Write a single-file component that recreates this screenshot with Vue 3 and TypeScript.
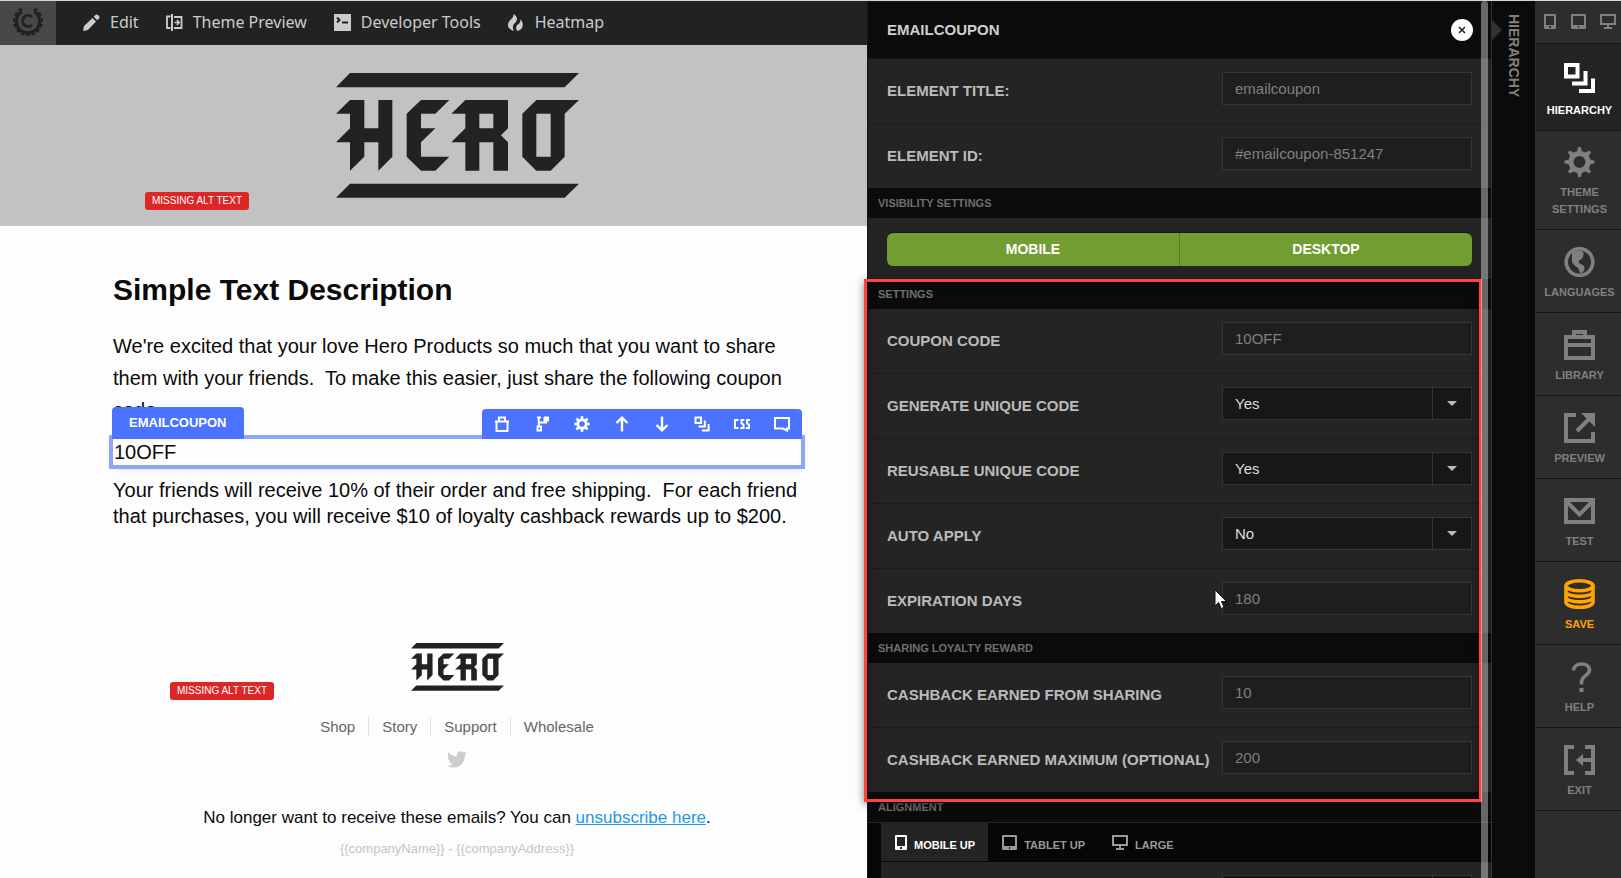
<script setup lang="ts">
import { ref, reactive } from 'vue'

interface Field {
  id: string
  label: string
  kind: 'text' | 'select'
  options?: string[]
}
interface NavItem {
  id: string
  label: string
}

const values = reactive<Record<string, string>>({
  title: 'emailcoupon',
  elementId: '#emailcoupon-851247',
  coupon: '10OFF',
  unique: 'Yes',
  reusable: 'Yes',
  autoApply: 'No',
  expiration: '180',
  cashback: '10',
  cashbackMax: '200',
  align: 'Left',
})

const elementFields: Field[] = [
  { id: 'title', label: 'ELEMENT TITLE:', kind: 'text' },
  { id: 'elementId', label: 'ELEMENT ID:', kind: 'text' },
]
const yesNo = ['Yes', 'No']
const settingFields: Field[] = [
  { id: 'coupon', label: 'COUPON CODE', kind: 'text' },
  { id: 'unique', label: 'GENERATE UNIQUE CODE', kind: 'select', options: yesNo },
  { id: 'reusable', label: 'REUSABLE UNIQUE CODE', kind: 'select', options: yesNo },
  { id: 'autoApply', label: 'AUTO APPLY', kind: 'select', options: yesNo },
  { id: 'expiration', label: 'EXPIRATION DAYS', kind: 'text' },
]
const rewardFields: Field[] = [
  { id: 'cashback', label: 'CASHBACK EARNED FROM SHARING', kind: 'text' },
  { id: 'cashbackMax', label: 'CASHBACK EARNED MAXIMUM (OPTIONAL)', kind: 'text' },
]

const navItems: NavItem[] = [
  { id: 'hierarchy', label: 'HIERARCHY' },
  { id: 'theme', label: 'THEME SETTINGS' },
  { id: 'languages', label: 'LANGUAGES' },
  { id: 'library', label: 'LIBRARY' },
  { id: 'preview', label: 'PREVIEW' },
  { id: 'test', label: 'TEST' },
  { id: 'save', label: 'SAVE' },
  { id: 'help', label: 'HELP' },
  { id: 'exit', label: 'EXIT' },
]

const tabs = [
  { id: 'mobile', label: 'MOBILE UP', width: 12 },
  { id: 'tablet', label: 'TABLET UP', width: 15 },
  { id: 'monitor', label: 'LARGE', width: 16 },
]
const devices = [
  { id: 'mobile', label: 'Mobile', width: 12 },
  { id: 'tablet', label: 'Tablet', width: 15 },
  { id: 'monitor', label: 'Desktop', width: 16 },
]
const activeTab = ref('mobile')
const visible = reactive({ mobile: true, desktop: true })
const footerLinks = ['Shop', 'Story', 'Support', 'Wholesale']
const octants = [0, 45, 90, 135, 180, 225, 270, 315]
const logoTeeth = [35, 60, 85, 110, 135, 158, 180, 202, 225, 250, 275, 300, 325]
</script>

<template>
  <div class="app">
    <svg class="defs" width="0" height="0" aria-hidden="true">
      <symbol id="hero-mark" viewBox="47 39 729 375">
        <path d="M89 39H776L733 82H47ZM89 371H776L733 413H47Z" />
        <path d="M47 161L89 120H132V205H174V120H216V290L174 332V247H132V290L89 332V247H47L89 205V161Z" />
        <path d="M302 120H387L345 161H302V205H345L302 247V290H387L345 332H302L259 290V161Z" />
        <path fill-rule="evenodd" d="M393 161L435 120H563V205L542 226L563 247V332H519V247H477V332H435V247H393L435 205V161ZM477 161V205H519V161Z" />
        <path fill-rule="evenodd" d="M648 120H776L733 161V290L691 332H648L606 290V161ZM648 161V290H691V161Z" />
      </symbol>
      <symbol id="dev-mobile" viewBox="0 0 12 15">
        <path fill-rule="evenodd" d="M1 0H11Q12 0 12 1V14Q12 15 11 15H1Q0 15 0 14V1Q0 0 1 0ZM2 2V11H10V2ZM5 12V14H7V12Z" />
      </symbol>
      <symbol id="dev-tablet" viewBox="0 0 15 15">
        <path fill-rule="evenodd" d="M1 0H14Q15 0 15 1V14Q15 15 14 15H1Q0 15 0 14V1Q0 0 1 0ZM2 2V11H13V2ZM7 12V14H8V12Z" />
      </symbol>
      <symbol id="dev-monitor" viewBox="0 0 16 15">
        <path fill-rule="evenodd" d="M0 0H16V11H9V13H12V15H4V13H7V11H0ZM2 2V9H14V2Z" />
      </symbol>
    </svg>

    <main class="canvas">
      <header class="topbar">
        <button class="brand" aria-label="Home">
          <svg width="32" height="30" viewBox="-16 -13 32 30" fill="none" stroke="currentColor">
            <path d="M-6 -9.5A11.5 11.5 0 1 0 6 -9.5" stroke-width="3" />
            <path v-for="a in logoTeeth" :key="a" :transform="`rotate(${a})`" d="M0 -12V-15" stroke-width="4" />
            <path d="M4 -4A5.500 5.500 0 1 0 4 4" stroke-width="3" />
          </svg>
        </button>
        <nav class="tools">
          <button>
            <svg width="17" height="17" viewBox="0 0 17 17" fill="currentColor"><path d="M0 17L1 12L9.500 4L13 7.500L5 16ZM10.700 2.800L13 .6Q14 0 15 1L16.200 2.200Q17 3.200 16.400 4L14.200 6.300Z" /></svg>Edit
          </button>
          <button>
            <svg width="17" height="17" viewBox="0 0 17 17" fill="none" stroke="currentColor"><path d="M4.500 2.500H1V14H4.500M8 3H15.500V14H8" stroke-width="1.800" /><path d="M6 0V17" stroke-width="2" /><path d="M8.500 8.500H13M10.800 6L13.200 8.500L10.800 11" stroke-width="1.600" /></svg>Theme Preview
          </button>
          <button>
            <svg width="17" height="17" viewBox="0 0 17 17"><path d="M0 0H17V17H0Z" fill="currentColor" /><path d="M3 3.500L5.500 6L3 8.500M8 8.500H14" fill="none" stroke="#222" stroke-width="2" /></svg>Developer Tools
          </button>
          <button>
            <svg width="17" height="17" viewBox="0 0 17 17" fill="currentColor"><path d="M5.500 0C11 3.500 9 7.500 6.500 9.500C4.500 11.200 4.500 14.500 6 17C-1 15-1.500 9.500 2.200 6.200C4.500 4.200 5.700 2.500 5.500 0ZM12.500 5C15.500 9 16.500 14.500 9.500 17C7.300 14.500 7.800 12.300 9.800 10.500C12 8.700 12.700 7 12.500 5Z" /></svg>Heatmap
          </button>
        </nav>
      </header>

      <section class="hero">
        <div class="image-slot">
          <svg class="hero-logo" viewBox="47 39 729 375" role="img" aria-label="HERO"><use href="#hero-mark" x="47" y="39" width="729" height="375" /></svg>
          <span class="badge badge-top">MISSING ALT TEXT</span>
        </div>
      </section>

      <article class="email">
        <h1>Simple Text Description</h1>
        <p class="intro">We're excited that your love Hero Products so much that you want to share them with your friends.&nbsp; To make this easier, just share the following coupon code.</p>
        <div class="selected">
          <span class="tag">EMAILCOUPON</span>
          <div class="actions">
            <button aria-label="Delete"><svg viewBox="0 0 16 16"><path d="M2.500 5.500H13.500V15H2.500ZM1 5.500H15M5 5V1.500H11V5" /></svg></button>
            <button aria-label="Branch"><svg viewBox="0 0 16 16"><path d="M4 10.500H7V14.500H3.500V10.500ZM4.800 10V1M3 1.500H7M12 1V6.500H5M10 1.500H14V4.500H10.500V1" /></svg></button>
            <button aria-label="Settings"><svg viewBox="-8 -8 16 16"><circle r="4.200" stroke-width="2.800" /><path v-for="a in octants" :key="a" :transform="`rotate(${a})`" d="M0 -5V-7.800" stroke-width="2.600" /></svg></button>
            <button aria-label="Move up"><svg viewBox="0 0 16 16"><path d="M8 15.500V2M2.500 7L8 1.700L13.500 7" stroke-width="2.400" /></svg></button>
            <button aria-label="Move down"><svg viewBox="0 0 16 16"><path d="M8 .5V14M2.500 9L8 14.300L13.500 9" stroke-width="2.400" /></svg></button>
            <button aria-label="Hierarchy"><svg viewBox="0 0 16 16"><path d="M1.500 1.500H7V7H1.500ZM10.800 4.500V10.600H4.500M14.600 8V14.600H8" /></svg></button>
            <button aria-label="Edit CSS"><svg viewBox="0 0 16 16"><path d="M4.500 4H1V12H4.500M10.300 4H7.500V7.500L9.500 8.500V12H6.300M15.800 4H13V7.500L15 8.500V12H11.800" /></svg></button>
            <button aria-label="Comment"><svg viewBox="0 0 16 16"><path d="M1 2H15V12.500H13V14.500L9 12.500H1Z" /></svg></button>
          </div>
          10OFF
        </div>
        <p class="offer">Your friends will receive 10% of their order and free shipping.&nbsp; For each friend that purchases, you will receive $10 of loyalty cashback rewards up to $200.</p>

        <footer class="mail-footer">
          <div class="image-slot">
            <svg class="small-logo" viewBox="47 39 729 375" role="img" aria-label="HERO"><use href="#hero-mark" x="47" y="39" width="729" height="375" /></svg>
            <span class="badge badge-footer">MISSING ALT TEXT</span>
          </div>
          <nav class="links">
            <a v-for="l in footerLinks" :key="l" href="#">{{ l }}</a>
          </nav>
          <a class="twitter" href="#" aria-label="Twitter">
            <svg width="20" height="17" viewBox="0 2 24 20" fill="currentColor"><path d="M24 4.600a10 10 0 0 1-2.800.8a5 5 0 0 0 2.100-2.700a10 10 0 0 1-3.100 1.200a4.900 4.900 0 0 0-8.400 4.500A14 14 0 0 1 1.700 3.200a4.900 4.900 0 0 0 1.500 6.500a5 5 0 0 1-2.200-.6a4.900 4.900 0 0 0 3.900 4.900a5 5 0 0 1-2.200.1a4.900 4.900 0 0 0 4.600 3.400A9.900 9.900 0 0 1 0 19.500a14 14 0 0 0 7.500 2.200c9.100 0 14-7.500 14-14v-.6A10 10 0 0 0 24 4.600Z" /></svg>
          </a>
          <p class="unsub">No longer want to receive these emails? You can <a href="#">unsubscribe here</a>.</p>
          <p class="company" v-pre>{{companyName}} - {{companyAddress}}</p>
        </footer>
      </article>
    </main>

    <aside class="panel">
      <header class="panel-head">
        <h2>EMAILCOUPON</h2>
        <button class="close" aria-label="Close"><svg width="8" height="8" viewBox="0 0 8 8"><path d="M1 1L7 7M7 1L1 7" stroke="#222" stroke-width="1.500" /></svg></button>
      </header>
      <div class="rows">
        <div v-for="f in elementFields" :key="f.id" class="row">
          <label :for="f.id">{{ f.label }}</label>
          <input :id="f.id" v-model="values[f.id]" class="field" type="text" />
        </div>
      </div>

      <h3>VISIBILITY SETTINGS</h3>
      <div class="visibility">
        <div class="toggle">
          <button :aria-pressed="visible.mobile" @click="visible.mobile = !visible.mobile">MOBILE</button>
          <button :aria-pressed="visible.desktop" @click="visible.desktop = !visible.desktop">DESKTOP</button>
        </div>
      </div>

      <div class="highlighted">
        <h3>SETTINGS</h3>
        <div class="rows">
          <div v-for="f in settingFields" :key="f.id" class="row">
            <label :for="f.id">{{ f.label }}</label>
            <input v-if="f.kind === 'text'" :id="f.id" v-model="values[f.id]" class="field" type="text" />
            <span v-else class="field picker">
              <select :id="f.id" v-model="values[f.id]">
                <option v-for="o in f.options" :key="o">{{ o }}</option>
              </select>
              <span class="arrow"></span>
            </span>
          </div>
        </div>
        <h3>SHARING LOYALTY REWARD</h3>
        <div class="rows">
          <div v-for="f in rewardFields" :key="f.id" class="row">
            <label :for="f.id">{{ f.label }}</label>
            <input :id="f.id" v-model="values[f.id]" class="field" type="text" />
          </div>
        </div>
        <div class="outline"></div>
        <svg class="cursor" width="14" height="21" viewBox="0 0 14 21"><path d="M1 1V17L4.700 13.500L7.300 19.500L10 18.300L7.500 12.500H12.500Z" fill="#fff" stroke="#111" /></svg>
      </div>

      <h3>ALIGNMENT</h3>
      <div class="alignment">
        <div class="tabs" role="tablist">
          <button v-for="t in tabs" :key="t.id" role="tab" :aria-selected="activeTab === t.id" :class="{ active: activeTab === t.id }" @click="activeTab = t.id">
            <svg :width="t.width" height="15"><use :href="`#dev-${t.id}`" /></svg><span>{{ t.label }}</span>
          </button>
        </div>
        <div class="row">
          <label for="align"></label>
          <span class="field picker">
            <select id="align" v-model="values.align" aria-label="Alignment"><option>Left</option></select>
            <span class="arrow"></span>
          </span>
        </div>
      </div>
      <div class="scrollbar"></div>
    </aside>

    <div class="strip"><span>HIERARCHY</span></div>

    <nav class="side">
      <div class="devices">
        <button v-for="d in devices" :key="d.id" :aria-label="d.label"><svg :width="d.width" height="15"><use :href="`#dev-${d.id}`" /></svg></button>
      </div>
      <button v-for="n in navItems" :key="n.id" :class="['item', n.id]">
        <svg width="31" height="30" viewBox="0 0 31 30" fill="none" stroke="currentColor" stroke-width="4">
          <path v-if="n.id === 'hierarchy'" d="M2 2H13.500V13.500H2ZM21.500 8V20.500H8M29 15.500V28H15" />
          <g v-else-if="n.id === 'theme'" transform="translate(15.500 15)">
            <circle r="8.500" stroke-width="5" />
            <path v-for="a in octants" :key="a" :transform="`rotate(${a})`" d="M-2.700 -9.500L-1.300 -15H1.300L2.700 -9.500Z" fill="currentColor" stroke="none" />
          </g>
          <g v-else-if="n.id === 'languages'">
            <circle cx="15.500" cy="15" r="13.300" stroke-width="3.600" />
            <path d="M8 6C11 2.500 20 2.500 19.500 6.500C19.300 10 18.500 12 16 13C13.500 14.500 14.500 16.500 18 17.500C21.500 19 21.500 23 17.500 26.500C15.500 27 15.500 22.500 13.500 20.500C9.500 18.500 7 14.500 8 11Z" fill="currentColor" stroke="none" />
          </g>
          <path v-else-if="n.id === 'library'" d="M2 7H29V28H2ZM2 15H29M10 7V2H21V7" />
          <g v-else-if="n.id === 'preview'">
            <path d="M12 2H2V28H29V19M13 18L25 6" />
            <path d="M17 0H31V14Z" fill="currentColor" stroke="none" />
          </g>
          <path v-else-if="n.id === 'test'" d="M2 4H29V26H2ZM2 5L15.500 18.500L29 5" />
          <g v-else-if="n.id === 'save'" stroke-width="3.600">
            <ellipse cx="15.500" cy="6.800" rx="13.500" ry="5" />
            <path d="M2 7V23C2 30 29 30 29 23V7M2 12.500C2 19 29 19 29 12.500M2 18C2 24.500 29 24.500 29 18" />
          </g>
          <g v-else-if="n.id === 'help'">
            <path d="M9.500 8.500C10 0 25.500 0 25.500 8C25.500 13.500 17.500 13.500 17.500 20.500V22.500" stroke-width="3.600" />
            <path d="M17.500 26V30" />
          </g>
          <g v-else>
            <path d="M10 2H2V28H10M21 2H29V28H21M17 15H29" />
            <path d="M12 15L19 9V21Z" fill="currentColor" stroke="none" />
          </g>
        </svg>
        <span>{{ n.label }}</span>
      </button>
    </nav>
  </div>
</template>

<style>
body {
  margin: 0;
}
</style>

<style scoped>
* {
  box-sizing: border-box;
}
.app {
  display: flex;
  height: 100vh;
  overflow: hidden;
  border-top: 1px solid #cfd8d4;
  background: #fdfdfd;
  font-family: "Liberation Sans", Arial, sans-serif;
}
.defs {
  position: absolute;
}
button {
  border: 0;
  padding: 0;
  background: none;
  color: inherit;
  font: inherit;
  cursor: pointer;
}
svg {
  display: block;
  flex: none;
}
h1,
h2,
h3,
p {
  margin: 0;
}

/* canvas */
.canvas {
  flex: 1;
  min-width: 0;
  color: #0a0a0a;
}
.topbar {
  display: flex;
  height: 44px;
  background: #222;
  color: #ccc;
}
.brand {
  display: flex;
  align-items: center;
  justify-content: center;
  width: 56px;
  background: #484848;
  color: #222;
}
.tools {
  display: flex;
  align-items: flex-start;
  gap: 27px;
  padding-left: 27px;
  font: 16px/42px "Noto Sans", "Open Sans", sans-serif;
}
.tools button {
  display: flex;
  align-items: center;
  gap: 10px;
}
.hero {
  padding: 28px 0 28px 47px;
  background: #c2c2c2;
}
.image-slot {
  position: relative;
  display: flex;
  justify-content: center;
  width: 688px;
  max-width: 100%;
  margin: 0 auto;
  color: #212322;
  fill: currentColor;
}
.hero-logo {
  width: 243px;
  height: 125px;
}
.small-logo {
  width: 93px;
  height: 48px;
}
.badge {
  position: absolute;
  padding: 0 7px;
  border-radius: 3px;
  background: #dd2727;
  color: #fff;
  font-size: 10px;
  line-height: 18px;
}
.badge-top {
  left: 32px;
  bottom: -12px;
}
.badge-footer {
  left: 57px;
  bottom: -9px;
}
.email {
  padding: 46px 0 0 47px;
  font-size: 20px;
}
.email > * {
  width: 688px;
  max-width: 100%;
  margin-left: auto;
  margin-right: auto;
}
h1 {
  font-size: 30px;
  line-height: 36px;
}
.intro {
  margin-top: 22px;
  line-height: 32px;
}
.selected {
  position: relative;
  margin-top: 13px;
  padding-left: 1px;
  background: #fdfdfd;
  box-shadow: 0 0 0 4px #8fa5fb, 0 2px 8px rgba(0, 0, 0, 0.2);
  line-height: 26px;
}
.tag,
.actions {
  position: absolute;
  bottom: 100%;
  border-radius: 4px 4px 0 0;
  background: #4b73ff;
  color: #fff;
}
.tag {
  left: -1px;
  padding: 0 17px;
  font-size: 13px;
  font-weight: bold;
  line-height: 32px;
}
.actions {
  right: -1px;
  display: flex;
}
.actions button {
  display: flex;
  align-items: center;
  justify-content: center;
  width: 40px;
  height: 30px;
}
.actions svg {
  width: 16px;
  height: 16px;
  fill: none;
  stroke: currentColor;
  stroke-width: 2;
}
.offer {
  margin-top: 12px;
  line-height: 26px;
}
.mail-footer {
  display: flex;
  flex-direction: column;
  align-items: center;
  margin-top: 114px;
}
.links {
  display: flex;
  margin-top: 26px;
  font-size: 15px;
  line-height: 20px;
}
.links a {
  padding: 0 13px;
  color: #666;
  text-decoration: none;
}
.links a + a {
  border-left: 1px solid #e2e2e2;
}
.twitter {
  margin-top: 14px;
  color: #ccc;
}
.unsub {
  margin-top: 37px;
  font-size: 17px;
  line-height: 26px;
}
.unsub a {
  color: #2199e8;
}
.company {
  margin-top: 8px;
  color: #c4c4c4;
  font-size: 13px;
  line-height: 20px;
}

/* settings panel */
.panel {
  position: relative;
  flex: none;
  width: 625px;
  height: 100%;
  border-left: 1px solid #151515;
  border-right: 1px solid #333;
  background: #242424;
  color: #bbb;
}
.panel-head {
  display: flex;
  align-items: center;
  justify-content: space-between;
  height: 58px;
  padding: 0 18px 0 19px;
  border-top: 1px solid #1a1a1a;
  border-bottom: 1px solid #181818;
  background: #0b0b0b;
}
h2 {
  color: #d0d0d0;
  font-size: 15px;
  line-height: 20px;
}
.close {
  display: flex;
  align-items: center;
  justify-content: center;
  width: 22px;
  height: 22px;
  border-radius: 50%;
  background: #fff;
}
h3 {
  padding-left: 10px;
  background: #0b0b0b;
  color: #6f6f6f;
  font-size: 11px;
  line-height: 30px;
}
.row {
  display: flex;
  justify-content: space-between;
  padding: 0 19px;
}
.row + .row {
  border-top: 1px solid #1b1b1b;
}
.row label {
  font-size: 15px;
  font-weight: bold;
  line-height: 64px;
  white-space: nowrap;
}
.field {
  flex: none;
  width: 250px;
  height: 33px;
  margin-top: 13px;
  border: 1px solid #363636;
  border-radius: 0;
  outline: 0;
  background: #1e1e1e;
  color: #808080;
  font: 15px "Liberation Sans", Arial, sans-serif;
}
input.field {
  padding: 0 12px;
}
.picker {
  display: flex;
  background: #171717;
}
.picker select {
  flex: 1;
  padding: 0 12px;
  border: 0;
  outline: 0;
  appearance: none;
  background: none;
  color: #ddd;
  font: inherit;
}
.arrow {
  display: flex;
  align-items: center;
  justify-content: center;
  width: 39px;
  border-left: 1px solid #363636;
  pointer-events: none;
}
.arrow::before {
  content: "";
  border: 5px solid transparent;
  border-top-color: #bbb;
  border-bottom: 0;
}
.visibility {
  padding: 15px 19px 13px;
}
.toggle {
  display: flex;
  overflow: hidden;
  border-radius: 6px;
  background: #729e31;
  box-shadow: 0 -1px 0 #151515;
}
.toggle button {
  flex: 1;
  height: 33px;
  padding-bottom: 2px;
  color: #fff;
  font-size: 14px;
  font-weight: bold;
}
.toggle button + button {
  border-left: 1px solid #587e22;
}
.highlighted {
  position: relative;
}
.outline {
  position: absolute;
  inset: 0 9px -10px -4px;
  border: 3px solid #ff4343;
  box-shadow: 0 2px 8px rgba(0, 0, 0, 0.5), inset 0 2px 8px rgba(0, 0, 0, 0.4);
  pointer-events: none;
}
.cursor {
  position: absolute;
  left: 346px;
  top: 310px;
}
.alignment {
  padding-left: 13px;
  border-top: 1px solid #242424;
  background: #060606;
}
.tabs {
  display: flex;
  border-bottom: 1px solid #060606;
}
.tabs button {
  display: flex;
  align-items: center;
  gap: 7px;
  padding: 0 13px 0 14px;
  height: 38px;
  color: #999;
  font-size: 11px;
  font-weight: bold;
}
.tabs svg {
  fill: currentColor;
}
.tabs span {
  padding-top: 6px;
}
.tabs .active {
  background: #242424;
  color: #fff;
}
.alignment .row {
  background: #242424;
}
.scrollbar {
  position: absolute;
  top: 0;
  right: 3px;
  bottom: 0;
  width: 7px;
  border-radius: 4px 4px 0 0;
  background: rgba(255, 255, 255, 0.38);
}

/* collapsed hierarchy strip */
.strip {
  position: relative;
  flex: none;
  width: 43px;
  padding: 13px 0 0 14px;
  background: #0b0b0b;
  color: #808080;
  font-size: 14px;
  font-weight: bold;
}
.strip::before {
  content: "";
  position: absolute;
  left: 0;
  top: 19px;
  border: 10px solid transparent;
  border-left-color: #333;
  border-right: 0;
}
.strip span {
  display: block;
  writing-mode: vertical-rl;
  line-height: 16px;
}

/* side navigation */
.side {
  flex: none;
  width: 86px;
  border-left: 1px solid #2d2d2d;
  background: #2d2d2d;
  color: #808080;
}
.devices {
  display: flex;
  align-items: center;
  justify-content: space-between;
  height: 43px;
  padding: 0 5px 2px 8px;
  border-bottom: 1px solid #151515;
}
.devices svg {
  fill: currentColor;
}
.item {
  display: flex;
  flex-direction: column;
  align-items: center;
  gap: 7px;
  width: 100%;
  padding: 17px 7px 11px 9px;
  border-bottom: 1px solid #151515;
  font-size: 11px;
  font-weight: bold;
  line-height: 17px;
}
.theme {
  padding-top: 16px;
}
.hierarchy {
  gap: 9px;
  padding-top: 19px;
  background: #242424;
  color: #fff;
}
.save {
  color: #ffa500;
}
</style>
